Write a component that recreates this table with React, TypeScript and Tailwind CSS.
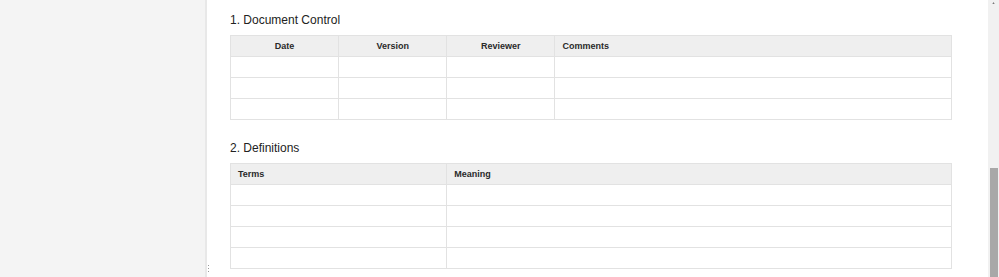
import React from 'react'

type Column = {
  label: string
  width: string
  align: 'center' | 'left'
}

const controlColumns: Column[] = [
  { label: 'Date', width: 'w-[15%]', align: 'center' },
  { label: 'Version', width: 'w-[15%]', align: 'center' },
  { label: 'Reviewer', width: 'w-[15%]', align: 'center' },
  { label: 'Comments', width: 'w-[55%]', align: 'left' },
]

const definitionColumns: Column[] = [
  { label: 'Terms', width: 'w-[30%]', align: 'left' },
  { label: 'Meaning', width: 'w-[70%]', align: 'left' },
]

function DocTable({ columns, rows }: { columns: Column[]; rows: number }) {
  return (
    <table className="w-full table-fixed border-collapse">
      <thead>
        <tr>
          {columns.map((col) => (
            <th
              key={col.label}
              className={`${col.width} h-[21px] border border-[#e2e2e2] bg-[#efefef] px-[7px] pt-[2px] pb-0 text-[9px] font-bold text-[#2a2a2a] ${
                col.align === 'center' ? 'text-center' : 'text-left'
              }`}
            >
              {col.label}
            </th>
          ))}
        </tr>
      </thead>
      <tbody>
        {Array.from({ length: rows }).map((_, i) => (
          <tr key={i}>
            {columns.map((col) => (
              <td key={col.label} className="h-[21px] border border-[#e2e2e2] bg-white p-0" />
            ))}
          </tr>
        ))}
      </tbody>
    </table>
  )
}

export default function App() {
  return (
    <div className="flex h-[277px] w-[999px] overflow-hidden bg-white font-['Liberation_Sans',Arial,sans-serif]">
      {/* Left panel */}
      <div className="w-[207px] shrink-0 border-r-[2px] border-[#e8e8e8] bg-[#f4f4f4]" />

      {/* Document */}
      <div className="relative flex-1 pl-[23px] pr-[36px] pt-[13px]">
        <h2 className="text-[12px] leading-[14px] font-normal text-[#222]">1. Document Control</h2>
        <div className="mt-[8px]">
          <DocTable columns={controlColumns} rows={3} />
        </div>

        <h2 className="mt-[21px] text-[12px] leading-[14px] font-normal text-[#222]">2. Definitions</h2>
        <div className="mt-[8px]">
          <DocTable columns={definitionColumns} rows={4} />
        </div>

        {/* drag handle */}
        <div className="absolute left-[1px] top-[265px] flex flex-col gap-[2px]">
          <span className="h-[1px] w-[1px] bg-[#9a9a9a]" />
          <span className="h-[1px] w-[1px] bg-[#9a9a9a]" />
          <span className="h-[1px] w-[1px] bg-[#9a9a9a]" />
        </div>
      </div>

      {/* Scrollbar */}
      <div className="flex w-[11px] shrink-0 flex-col items-center bg-[#f1f1f1]">
        <svg width="7" height="5" viewBox="0 0 7 5" className="mt-[2px]">
          <path d="M3.5 0.5 L6.5 4.5 L0.5 4.5 Z" fill="#505050" />
        </svg>
        <div className="mt-[164px] h-full w-[8px] bg-[#a8a8a8]" />
      </div>
    </div>
  )
}
